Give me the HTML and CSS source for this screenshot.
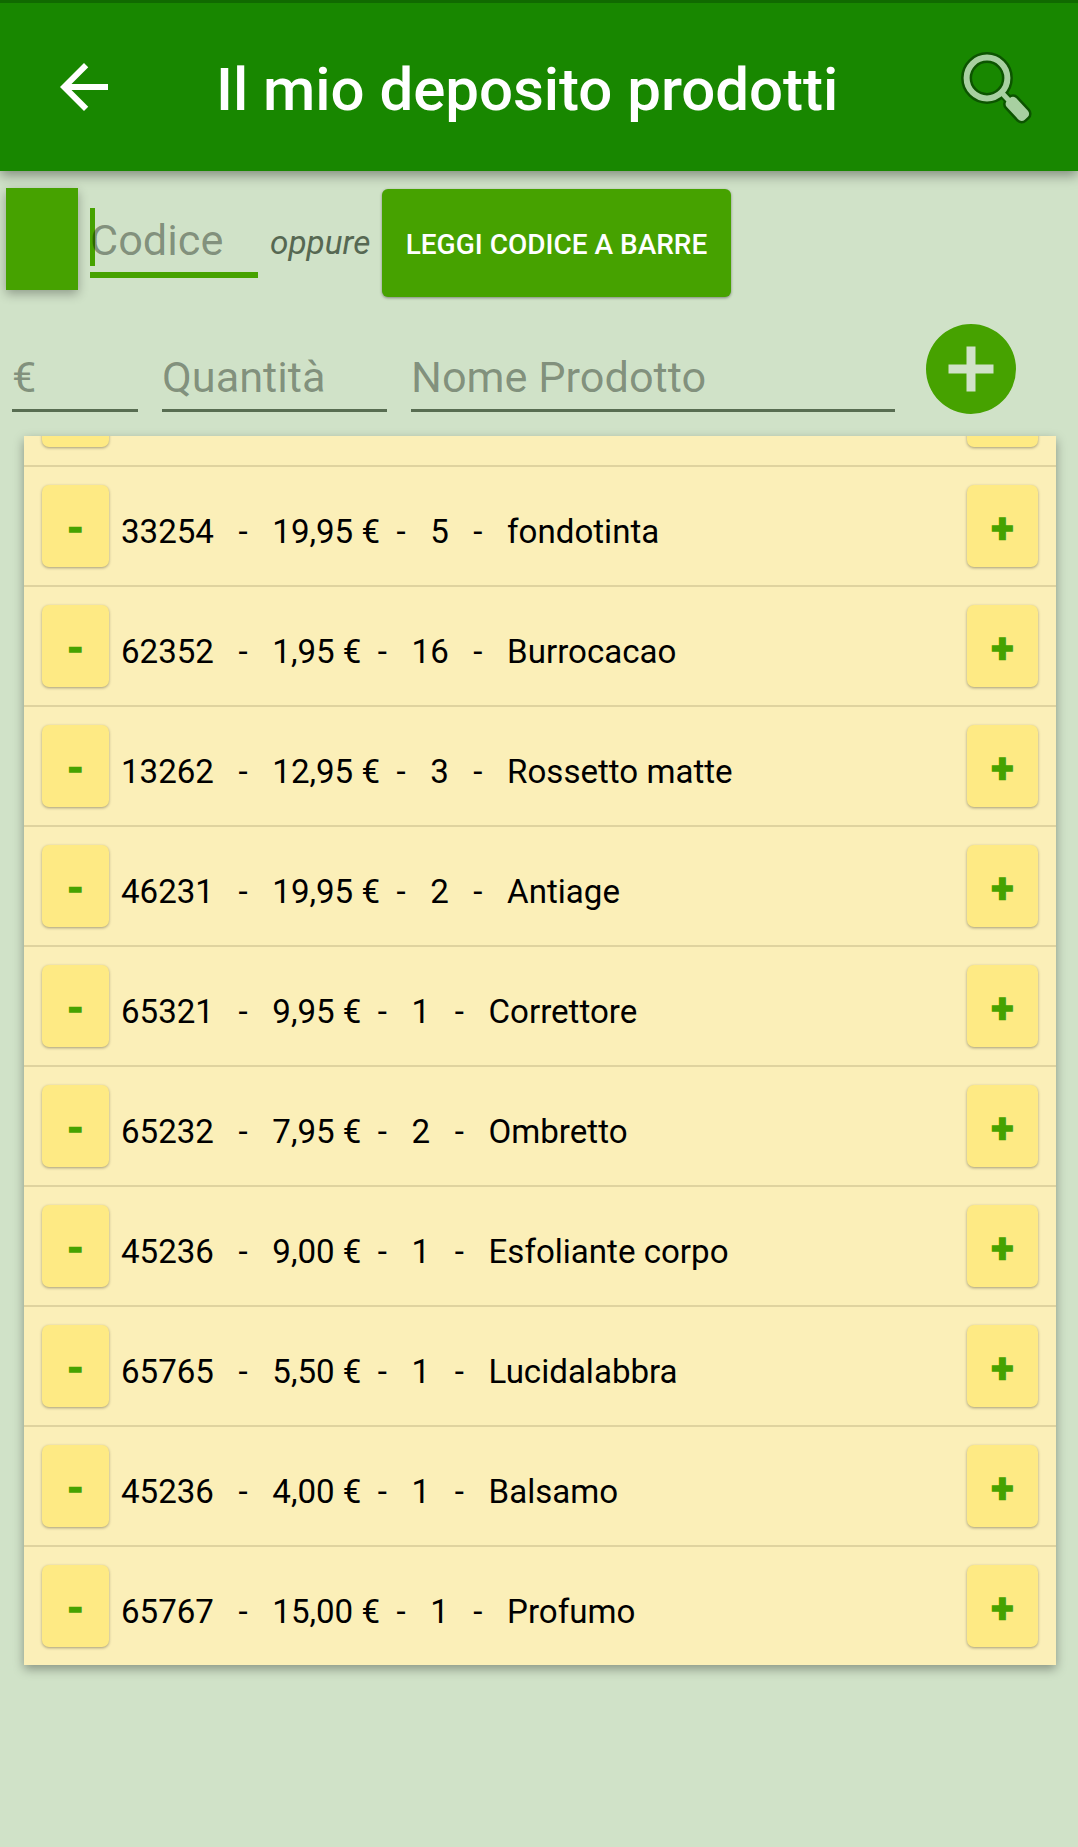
FILE: index.html
```html
<!DOCTYPE html>
<html lang="it">
<head>
  <meta charset="UTF-8">
  <title>Il mio deposito prodotti</title>
  <link rel="stylesheet" href="styles.css">
</head>
<body>
  <header>
    <svg class="back" viewBox="0 0 24 24"><path fill="#fff" d="M20 11H7.83l5.59-5.59L12 4l-8 8 8 8 1.41-1.41L7.83 13H20v-2z"/></svg>
    <h1>Il mio deposito prodotti</h1>
    <svg class="search" viewBox="0 0 72 72">
      <g fill="none" stroke="#0c5400">
        <circle cx="27" cy="27" r="20.4" stroke-width="11"/>
        <path d="M42 42l8 8" stroke-width="9.5"/>
        <rect x="44.5" y="51" width="26" height="13" rx="4.5" transform="rotate(47 57 57.5)" stroke-width="5"/>
      </g>
      <circle cx="27" cy="27" r="20.4" stroke-width="6" fill="none" stroke="#a8d0a1"/>
      <path d="M41.5 41.5l8 8.5" stroke-width="5" stroke="#a8d0a1"/>
      <rect x="44.5" y="51" width="26" height="13" rx="4.5" transform="rotate(47 57 57.5)" fill="#a8d0a1"/>
    </svg>
  </header>

  <div class="code-row">
    <div class="square"></div>
    <div class="field code focused">
      <input type="text" placeholder="Codice">
      <span class="caret"></span>
    </div>
    <em>oppure</em>
    <button class="scan">LEGGI CODICE A BARRE</button>
  </div>

  <div class="product-row">
    <div class="field price"><input type="text" placeholder="€"></div>
    <div class="field quantity"><input type="text" placeholder="Quantità"></div>
    <div class="field name"><input type="text" placeholder="Nome Prodotto"></div>
    <svg class="add" viewBox="0 0 20 20"><path fill="#46a200" d="M10 0a10 10 0 1 0 0 20 10 10 0 0 0 0-20zm5 11h-4v4H9v-4H5V9h4V5h2v4h4v2z"/></svg>
  </div>

  <!-- Product list, scrolled to the end -->
  <div class="list">
    <div class="item"><button class="minus"></button><p></p><button class="plus"></button></div>
    <div class="item"><button class="minus">-</button><p>33254   -   19,95 €  -   5   -   fondotinta</p><button class="plus">+</button></div>
    <div class="item"><button class="minus">-</button><p>62352   -   1,95 €  -   16   -   Burrocacao</p><button class="plus">+</button></div>
    <div class="item"><button class="minus">-</button><p>13262   -   12,95 €  -   3   -   Rossetto matte</p><button class="plus">+</button></div>
    <div class="item"><button class="minus">-</button><p>46231   -   19,95 €  -   2   -   Antiage</p><button class="plus">+</button></div>
    <div class="item"><button class="minus">-</button><p>65321   -   9,95 €  -   1   -   Correttore</p><button class="plus">+</button></div>
    <div class="item"><button class="minus">-</button><p>65232   -   7,95 €  -   2   -   Ombretto</p><button class="plus">+</button></div>
    <div class="item"><button class="minus">-</button><p>45236   -   9,00 €  -   1   -   Esfoliante corpo</p><button class="plus">+</button></div>
    <div class="item"><button class="minus">-</button><p>65765   -   5,50 €  -   1   -   Lucidalabbra</p><button class="plus">+</button></div>
    <div class="item"><button class="minus">-</button><p>45236   -   4,00 €  -   1   -   Balsamo</p><button class="plus">+</button></div>
    <div class="item"><button class="minus">-</button><p>65767   -   15,00 €  -   1   -   Profumo</p><button class="plus">+</button></div>
  </div>
</body>
</html>
```

FILE: styles.css
```css
* {
  box-sizing: border-box;
}

body {
  margin: 0;
  height: 1847px;
  overflow: hidden;
  background: #d0e2c8;
  font-family: Roboto, sans-serif;
}

header {
  display: flex;
  align-items: flex-start;
  height: 171px;
  border-top: 3px solid #106a00;
  background: #188700;
  box-shadow: 0 4px 12px rgba(0,0,0,0.4);
}

.back {
  width: 72px;
  height: 72px;
  margin: 48px 0 0 48px;
}

h1 {
  flex: 1;
  margin: 51px 0 0 96px;
  font-size: 60px;
  font-weight: 500;
  line-height: 72px;
  letter-spacing: -0.04px;
  white-space: nowrap;
  color: #fff;
}

.search {
  width: 72px;
  height: 72px;
  margin: 48px 46px 0 0;
  overflow: visible;
}

button {
  padding: 0;
  border: none;
  font-family: inherit;
}

/* Code entry */
.code-row {
  display: flex;
  align-items: flex-start;
  height: 153px;
  padding: 17px 0 0 6px;
}

.square {
  width: 72px;
  height: 102px;
  background: #46a200;
  box-shadow: 0 4px 10px rgba(0,0,0,0.3);
}

.field {
  position: relative;
  border-bottom: 3px solid #586d52;
}

.field input {
  display: block;
  width: 100%;
  height: 64px;
  padding: 0;
  border: none;
  outline: none;
  background: none;
  font-family: inherit;
  font-size: 43.3px;
}

.field input::placeholder {
  color: rgba(0,10,0,0.39);
  opacity: 1;
}

.code {
  width: 168px;
  height: 70px;
  margin: 20px 0 0 12px;
}

.focused {
  border-bottom: 6px solid #46a200;
}

.caret {
  position: absolute;
  z-index: -1;
  left: 0;
  top: 0;
  width: 5px;
  height: 58px;
  background: #46a200;
}

em {
  width: 100px;
  margin: 35px 0 0 12px;
  font-size: 33.3px;
  line-height: 40px;
  color: #566852;
}

.scan {
  width: 349px;
  height: 108px;
  padding-top: 2px;
  margin: 1px 0 0 12px;
  border-radius: 6px;
  background: #46a200;
  box-shadow: 0 1px 3px rgba(0,0,0,0.4);
  color: #fff;
  font-size: 28px;
  font-weight: 500;
}

/* Product entry */
.product-row {
  display: flex;
  align-items: flex-start;
  gap: 24px;
  height: 112px;
  padding-left: 12px;
}

.product-row .field {
  height: 67px;
  margin-top: 21px;
}

.price {
  width: 126px;
}

.quantity {
  width: 225px;
}

.name {
  width: 484px;
}

.add {
  width: 90px;
  height: 90px;
  margin-left: 7px;
}

/* List */
.list {
  display: flex;
  flex-direction: column;
  justify-content: flex-end;
  height: 1229px;
  margin: 0 22px 0 24px;
  overflow: hidden;
  background: #fbefb8;
  box-shadow: 0 4px 10px rgba(0,0,0,0.35);
}

.item {
  display: flex;
  flex-shrink: 0;
  height: 120px;
  padding: 18px 18px 0 18px;
  border-bottom: 2px solid #dfd39f;
}

.item:last-child {
  height: 118px;
  border-bottom: none;
}

.item p {
  flex: 1;
  margin: 27px 0 0 12px;
  font-size: 33.1px;
  line-height: 40px;
  white-space: pre;
  color: #000;
}

.minus,
.plus {
  width: 67px;
  height: 82px;
  padding-top: 5px;
  border-radius: 7px;
  background: #feea84;
  box-shadow: 0 1px 3px rgba(0,0,0,0.35);
  color: #46a200;
  font-size: 40px;
  font-weight: bold;
  -webkit-text-stroke: 1.6px #46a200;
}

.plus {
  width: 71px;
}
```
